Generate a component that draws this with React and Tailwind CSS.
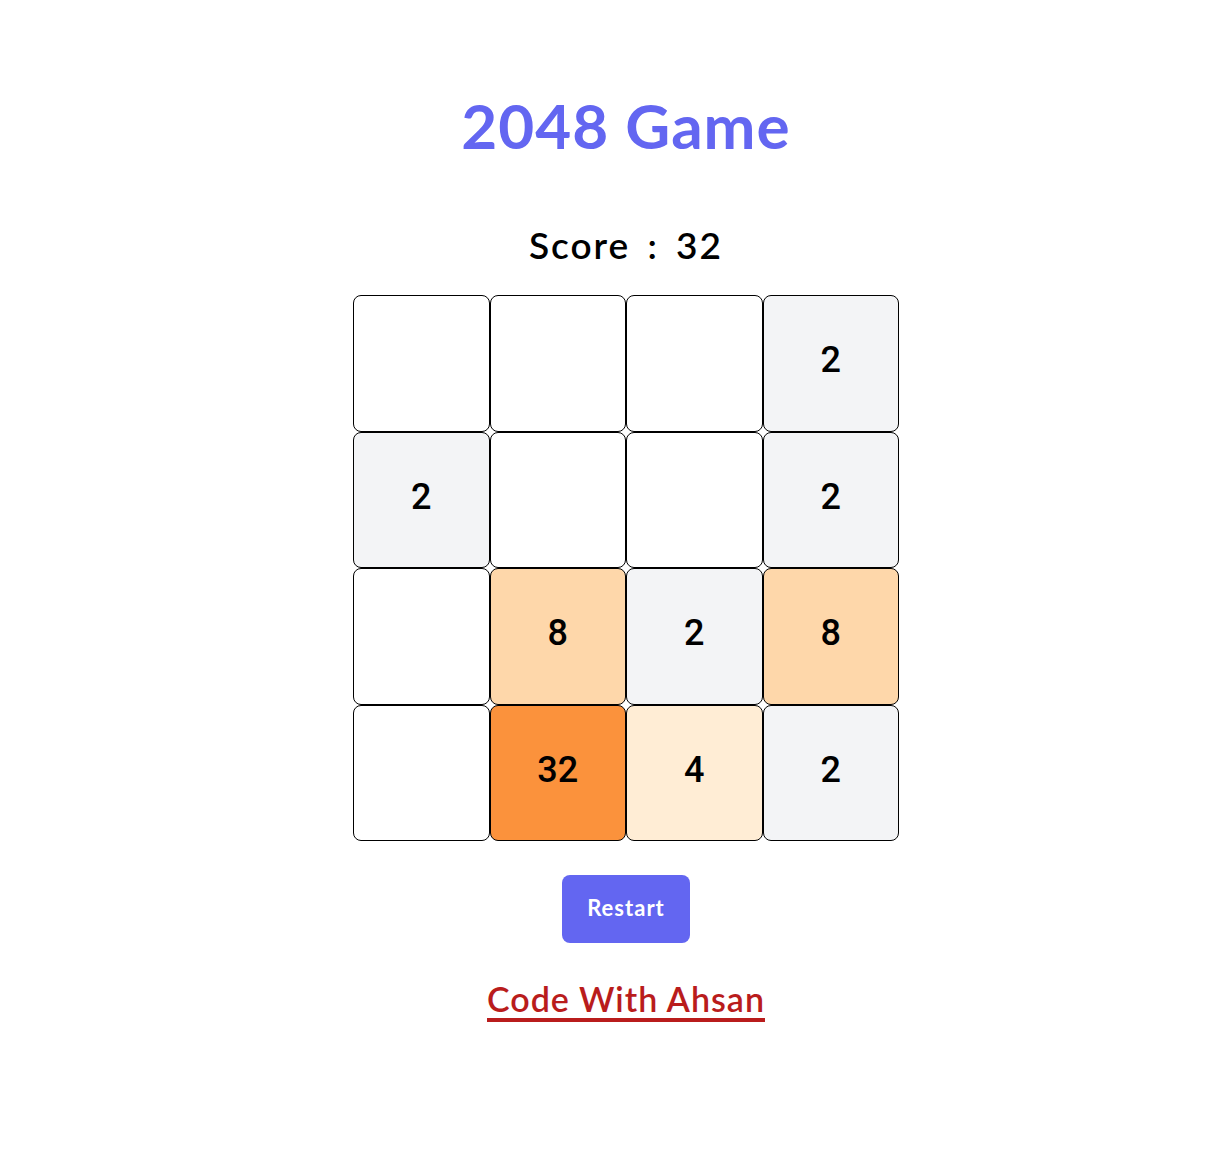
import React, { useState } from 'react';

const initialBoard = [
    [0, 0, 0, 2],
    [2, 0, 0, 2],
    [0, 8, 2, 8],
    [0, 32, 4, 2],
];

// tile colour per value
const tileClass = (v) => {
    switch (v) {
        case 2: return 'bg-[#f3f4f6]';
        case 4: return 'bg-[#ffedd5]';
        case 8: return 'bg-[#fed7aa]';
        case 16: return 'bg-[#fdba74]';
        case 32: return 'bg-[#fb923c]';
        case 64: return 'bg-[#f97316]';
        default: return 'bg-white';
    }
};

const App = () => {
    const [board, setBoard] = useState(initialBoard);
    const [score, setScore] = useState(32);

    const restart = () => {
        setBoard(initialBoard);
        setScore(32);
    };

    return (
        <div className="min-h-screen w-full bg-white flex flex-col items-center pl-[24px] font-['Lato',sans-serif]">
            <h1 className="mt-[95px] text-[62px] leading-[60px] font-bold text-[#6366f1] tracking-[1px]">
                2048 Game
            </h1>

            <h2 className="mt-[70px] text-[37px] leading-[40px] font-semibold text-black tracking-[2px]">
                Score <span className="mx-[6px]">:</span> {score}
            </h2>

            <div className="mt-[30px] grid grid-cols-4 w-[546px] h-[546px]">
                {board.flat().map((v, i) => (
                    <div
                        key={i}
                        className={`${tileClass(v)} border border-black rounded-lg flex items-center justify-center pb-[6px] text-[36px] font-medium text-black font-['Roboto',sans-serif]`}
                    >
                        {v !== 0 ? v : ''}
                    </div>
                ))}
            </div>

            <button
                onClick={restart}
                className="mt-[34px] w-[128px] h-[68px] rounded-lg bg-[#6366f1] text-white text-[22px] font-bold tracking-[1px] pb-[4px]"
            >
                Restart
            </button>

            <a
                href="#"
                className="mt-[36px] text-[34px] leading-[40px] font-semibold text-[#b91c1c] tracking-[1px] underline decoration-4 underline-offset-[6px]"
            >
                Code With Ahsan
            </a>
        </div>
    );
};

export default App;
